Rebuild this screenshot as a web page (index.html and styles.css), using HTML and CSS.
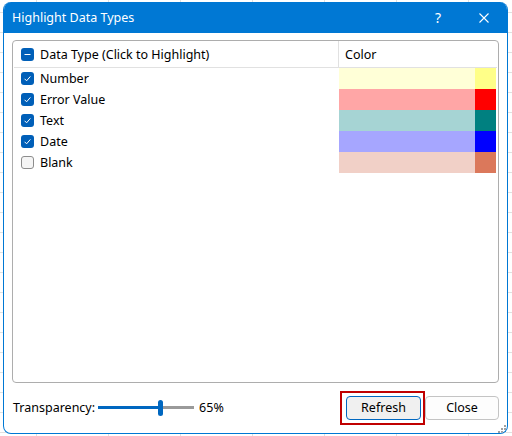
FILE: index.html
```html
<!DOCTYPE html>
<html lang="en">
<head>
  <meta charset="UTF-8" />
  <title>Highlight Data Types</title>
  <link rel="stylesheet" href="styles.css">
</head>
<body>
  <div class="dialog">
    <div class="titlebar">
      <span class="title">Highlight Data Types</span>
      <span class="help">?</span>
      <svg class="close-x" width="10" height="10" viewBox="0 0 10 10">
        <path d="M0.5 0.5L9.5 9.5M9.5 0.5L0.5 9.5" stroke="#fff" stroke-width="1.1" fill="none"/>
      </svg>
    </div>

    <div class="content">
      <div class="listbox">
        <div class="head">
          <div class="col-type">
            <span class="box checked">
              <svg width="13" height="13" viewBox="0 0 13 13"><path d="M3.5 6.5h6" stroke="#fff" stroke-width="1.2"/></svg>
            </span>
            Data Type (Click to Highlight)
          </div>
          <div class="col-color">Color</div>
        </div>

        <div class="row">
          <div class="col-type"><span class="box checked"><svg width="13" height="13" viewBox="0 0 13 13"><path d="M3.6 6.8l2 2 3.8-4.4" stroke="#fff" stroke-width="1" fill="none"/></svg></span>Number</div>
          <div class="swatch"><span class="light" style="background:#ffffd7"></span><span class="dark" style="background:#ffff88"></span></div>
        </div>
        <div class="row">
          <div class="col-type"><span class="box checked"><svg width="13" height="13" viewBox="0 0 13 13"><path d="M3.6 6.8l2 2 3.8-4.4" stroke="#fff" stroke-width="1" fill="none"/></svg></span>Error Value</div>
          <div class="swatch"><span class="light" style="background:#ffa6a6"></span><span class="dark" style="background:#ff0000"></span></div>
        </div>
        <div class="row">
          <div class="col-type"><span class="box checked"><svg width="13" height="13" viewBox="0 0 13 13"><path d="M3.6 6.8l2 2 3.8-4.4" stroke="#fff" stroke-width="1" fill="none"/></svg></span>Text</div>
          <div class="swatch"><span class="light" style="background:#a6d4d4"></span><span class="dark" style="background:#008080"></span></div>
        </div>
        <div class="row">
          <div class="col-type"><span class="box checked"><svg width="13" height="13" viewBox="0 0 13 13"><path d="M3.6 6.8l2 2 3.8-4.4" stroke="#fff" stroke-width="1" fill="none"/></svg></span>Date</div>
          <div class="swatch"><span class="light" style="background:#a6a6ff"></span><span class="dark" style="background:#0000ff"></span></div>
        </div>
        <div class="row">
          <div class="col-type"><span class="box"></span>Blank</div>
          <div class="swatch"><span class="light" style="background:#f1d0c7"></span><span class="dark" style="background:#db785b"></span></div>
        </div>
      </div>

      <div class="footer">
        <span class="label">Transparency:</span>
        <div class="slider">
          <span class="fill"></span>
          <span class="thumb"></span>
          <span class="rest"></span>
        </div>
        <span class="pct">65%</span>
        <span class="spacer"></span>
        <span class="focus-ring"><button class="btn btn-default">Refresh</button></span>
        <button class="btn">Close</button>
      </div>
    </div>

    <svg class="grip" width="9" height="9" viewBox="0 0 9 9">
      <rect x="7" y="1" width="2" height="2" fill="#a0a0a0"/>
      <rect x="4" y="4" width="2" height="2" fill="#a0a0a0"/>
      <rect x="7" y="4" width="2" height="2" fill="#a0a0a0"/>
      <rect x="1" y="7" width="2" height="2" fill="#a0a0a0"/>
      <rect x="4" y="7" width="2" height="2" fill="#a0a0a0"/>
      <rect x="7" y="7" width="2" height="2" fill="#a0a0a0"/>
    </svg>
  </div>
</body>
</html>
```

FILE: styles.css
```css
html, body {
  margin: 0;
  padding: 0;
}

body {
  width: 512px;
  height: 436px;
  overflow: hidden;
  font-family: 'Noto Sans', sans-serif;
  font-size: 12.5px;
  color: #000;
  background-color: #fff;
  background-image:
    linear-gradient(to right, #e1e1e1 1px, transparent 1px),
    linear-gradient(to bottom, #e1e1e1 1px, transparent 1px);
  background-size: 72px 20px;
  background-position: 36px 12px;
  padding-top: 2px;
  padding-left: 3px;
  box-sizing: border-box;
}

.dialog {
  position: relative;
  width: 505px;
  height: 432px;
  box-sizing: border-box;
  border: 1px solid #0078d4;
  border-top: none;
  border-radius: 8px;
  background: #fff;
  display: flex;
  flex-direction: column;
  overflow: hidden;
}

.titlebar {
  height: 31px;
  background: #0078d4;
  color: #fff;
  display: flex;
  align-items: center;
  padding-left: 8px;
  flex-shrink: 0;
}

.title {
  flex: 1;
  font-size: 12.5px;
}

.help {
  font-size: 14px;
  margin-right: 38px;
}

.close-x {
  margin-right: 18px;
}

.content {
  flex: 1;
  display: flex;
  flex-direction: column;
  padding: 7px 8px 0 8px;
}

.listbox {
  height: 343px;
  box-sizing: border-box;
  border: 1px solid #adadad;
  border-radius: 4px;
  padding: 0 1px;
}

.head {
  display: flex;
  height: 27px;
  box-sizing: border-box;
  border-bottom: 1px solid #e1e1e1;
}

.head .col-type {
  width: 325px;
  border-right: 1px solid #e1e1e1;
}

.head .col-color {
  width: 157px;
  padding-left: 6px;
  box-sizing: border-box;
  display: flex;
  align-items: center;
}

.col-type {
  display: flex;
  align-items: center;
  padding-left: 7px;
  box-sizing: border-box;
}

.box {
  width: 13px;
  height: 13px;
  box-sizing: border-box;
  border-radius: 3px;
  border: 1px solid #8d8d8d;
  background: #f5f5f5;
  margin-right: 6px;
  display: inline-flex;
}

.box.checked {
  border: none;
  background: #005fb8;
}

.row {
  display: flex;
  height: 21px;
}

.row .col-type {
  width: 325px;
}

.swatch {
  display: flex;
  width: 157px;
}

.swatch .light {
  width: 136px;
}

.swatch .dark {
  width: 21px;
}

.footer {
  display: flex;
  align-items: center;
  height: 49px;
  padding-left: 1px;
}

.label {
  margin-right: 3px;
}

.slider {
  display: flex;
  align-items: center;
  width: 96px;
  height: 16px;
}

.slider .fill {
  width: 60px;
  height: 3px;
  background: #0067c0;
}

.slider .thumb {
  width: 5px;
  height: 16px;
  border-radius: 3px;
  background: #0067c0;
}

.slider .rest {
  flex: 1;
  height: 3px;
  background: #9a9a9a;
}

.pct {
  margin-left: 5px;
}

.spacer {
  flex: 1;
}

.focus-ring {
  border: 2px solid #c00000;
  padding: 3px 2px 3px 4px;
  display: flex;
}

.btn {
  font-family: inherit;
  font-size: 12.5px;
  width: 74px;
  height: 24px;
  box-sizing: border-box;
  border: 1px solid #c4c4c4;
  border-radius: 4px;
  background: #fdfdfd;
  color: #000;
  padding: 0;
}

.btn-default {
  width: 75px;
  border-color: #0067c0;
  background: #f0f0f0;
}

.grip {
  position: absolute;
  right: 1px;
  bottom: 0;
}
```
